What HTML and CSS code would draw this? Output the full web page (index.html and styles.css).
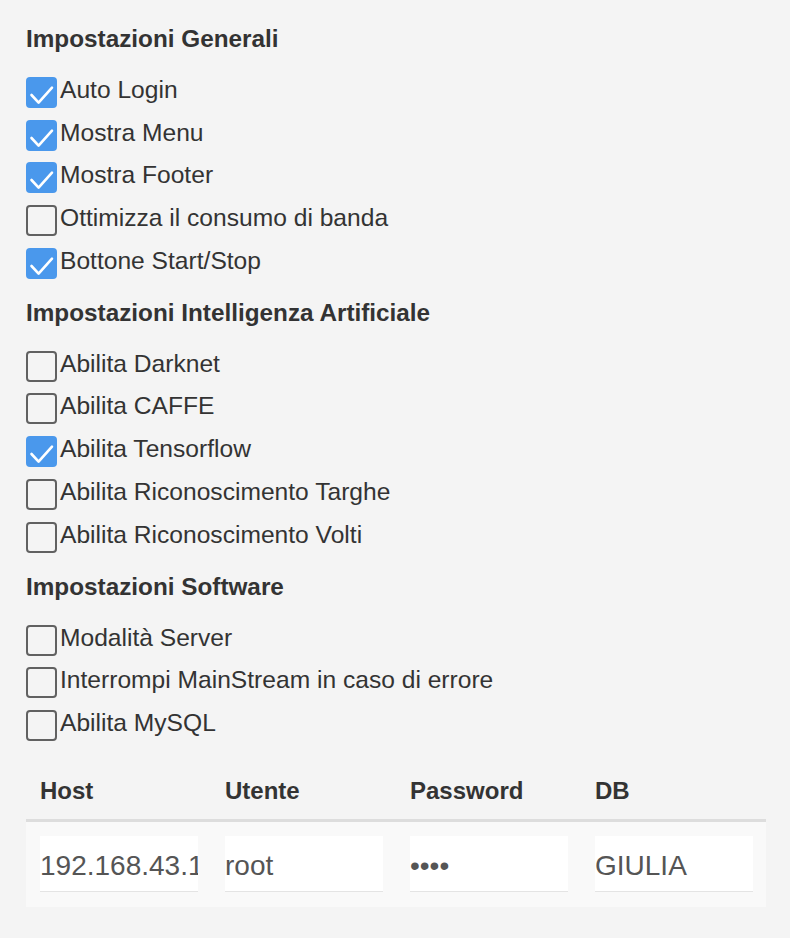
FILE: index.html
```html
<!DOCTYPE html>
<html lang="it">
<head>
<meta charset="utf-8">
<title>Impostazioni</title>
<link rel="stylesheet" href="styles.css">
</head>
<body>
<div class="page">
  <section class="section">
    <h2 class="title">Impostazioni Generali</h2>
    <div class="list">
      <label class="row"><span class="box checked"><svg viewBox="0 0 31 31"><path d="M5.5 18 L12.6 25.6 L26 10.6"/></svg></span><span class="text">Auto Login</span></label>
      <label class="row"><span class="box checked"><svg viewBox="0 0 31 31"><path d="M5.5 18 L12.6 25.6 L26 10.6"/></svg></span><span class="text">Mostra Menu</span></label>
      <label class="row"><span class="box checked"><svg viewBox="0 0 31 31"><path d="M5.5 18 L12.6 25.6 L26 10.6"/></svg></span><span class="text">Mostra Footer</span></label>
      <label class="row"><span class="box"></span><span class="text">Ottimizza il consumo di banda</span></label>
      <label class="row"><span class="box checked"><svg viewBox="0 0 31 31"><path d="M5.5 18 L12.6 25.6 L26 10.6"/></svg></span><span class="text">Bottone Start/Stop</span></label>
    </div>
  </section>
  <section class="section">
    <h2 class="title">Impostazioni Intelligenza Artificiale</h2>
    <div class="list">
      <label class="row"><span class="box"></span><span class="text">Abilita Darknet</span></label>
      <label class="row"><span class="box"></span><span class="text">Abilita CAFFE</span></label>
      <label class="row"><span class="box checked"><svg viewBox="0 0 31 31"><path d="M5.5 18 L12.6 25.6 L26 10.6"/></svg></span><span class="text">Abilita Tensorflow</span></label>
      <label class="row"><span class="box"></span><span class="text">Abilita Riconoscimento Targhe</span></label>
      <label class="row"><span class="box"></span><span class="text">Abilita Riconoscimento Volti</span></label>
    </div>
  </section>
  <section class="section">
    <h2 class="title">Impostazioni Software</h2>
    <div class="list">
      <label class="row"><span class="box"></span><span class="text">Modalità Server</span></label>
      <label class="row"><span class="box"></span><span class="text">Interrompi MainStream in caso di errore</span></label>
      <label class="row"><span class="box"></span><span class="text">Abilita MySQL</span></label>
    </div>
  </section>
  <table class="db">
    <thead>
      <tr><th>Host</th><th>Utente</th><th>Password</th><th>DB</th></tr>
    </thead>
    <tbody>
      <tr>
        <td><input class="field" type="text" value="192.168.43.100"></td>
        <td><input class="field" type="text" value="root"></td>
        <td><input class="field" type="password" value="root"></td>
        <td><input class="field" type="text" value="GIULIA"></td>
      </tr>
    </tbody>
  </table>
</div>
</body>
</html>
```
FILE: styles.css
```css
html, body {
  margin: 0;
  background: #f4f4f4;
}
body {
  font-family: "Liberation Sans", Arial, Helvetica, sans-serif;
  color: #333;
}
.page {
  padding: 25px 24px 0 26px;
}
.section + .section {
  margin-top: 20px;
}
.title {
  margin: 0;
  font-size: 24.3px;
  line-height: 28px;
  font-weight: bold;
  color: #333;
}
.list {
  margin-top: 24px;
  display: flex;
  flex-direction: column;
  gap: 11.7px;
}
.row {
  display: flex;
  align-items: flex-start;
  height: 31px;
}
.box {
  box-sizing: border-box;
  width: 31px;
  height: 31px;
  flex: none;
  border: 2px solid #616161;
  border-radius: 4px;
  background: #f4f4f4;
}
.box.checked {
  border: none;
  background: #4a98ec;
}
.box svg {
  display: block;
  width: 31px;
  height: 31px;
}
.box svg path {
  fill: none;
  stroke: #fff;
  stroke-width: 2.6;
  stroke-linecap: round;
  stroke-linejoin: round;
}
.text {
  margin-left: 3px;
  font-size: 24.6px;
  line-height: 26px;
  color: #333;
  white-space: nowrap;
}
.db {
  margin-top: 22px;
  width: 740px;
  border-collapse: separate;
  border-spacing: 0;
  table-layout: fixed;
}
.db th {
  text-align: left;
  font-size: 24px;
  line-height: 28px;
  font-weight: bold;
  color: #333;
  padding: 14px 13px 14px 14px;
  border-bottom: 3px solid #ddd;
}
.db td {
  background: #f9f9f9;
  padding: 14px 13px 15px 14px;
}
.field {
  display: block;
  box-sizing: border-box;
  width: 100%;
  height: 56px;
  margin: 0;
  padding: 5px 0 0 0;
  border: none;
  border-bottom: 1px solid #e4e4e4;
  border-radius: 0;
  background: #fff;
  font-family: "Liberation Sans", Arial, Helvetica, sans-serif;
  font-size: 28px;
  color: #555;
  outline: none;
}
```
